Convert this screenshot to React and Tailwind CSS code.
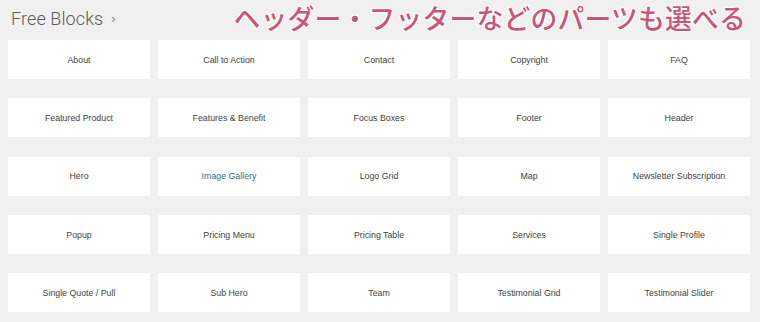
import React from "react";

const items = [
  "About", "Call to Action", "Contact", "Copyright", "FAQ",
  "Featured Product", "Features & Benefit", "Focus Boxes", "Footer", "Header",
  "Hero", "Image Gallery", "Logo Grid", "Map", "Newsletter Subscription",
  "Popup", "Pricing Menu", "Pricing Table", "Services", "Single Profile",
  "Single Quote / Pull", "Sub Hero", "Team", "Testimonial Grid", "Testimonial Slider",
];

export default function App() {
  return (
    <div className="w-[760px] h-[322px] bg-[#f0f0f0] overflow-hidden font-['Liberation_Sans',sans-serif]">
      <div className="h-[40px] flex items-start justify-between pl-[11px] pr-[14px]">
        <div className="flex items-center mt-[5px]">
          <span className="text-[18px] font-['Roboto',sans-serif] font-light text-[#5a5a5a] tracking-[0.1px]">Free Blocks</span>
          <span className="ml-[8px] text-[13px] text-[#8a8a8a] font-['Liberation_Sans',sans-serif]">›</span>
        </div>
        <div
          className="text-[26.8px] leading-[30px] mt-[3px] font-medium text-[#c95679] font-['Noto_Sans_CJK_JP',sans-serif] tracking-[0.2px]"
          style={{ textShadow: "0 0 2px #fff, 1px 1px 1px #fff, -1px -1px 1px #fff, 1px -1px 1px #fff, -1px 1px 1px #fff" }}
        >
          ヘッダー・フッターなどのパーツも選べる
        </div>
      </div>
      <div className="grid grid-cols-[repeat(5,142px)] gap-x-[8px] gap-y-[19.25px] pl-[8px]">
        {items.map((t) => (
          <div
            key={t}
            className={`h-[39px] bg-white flex items-center justify-center pt-[2px] text-[8.8px] ${t === "Image Gallery" ? "text-[#2f6f93]" : "text-[#3f3f3f]"}`}
          >
            {t}
          </div>
        ))}
      </div>
    </div>
  );
}
